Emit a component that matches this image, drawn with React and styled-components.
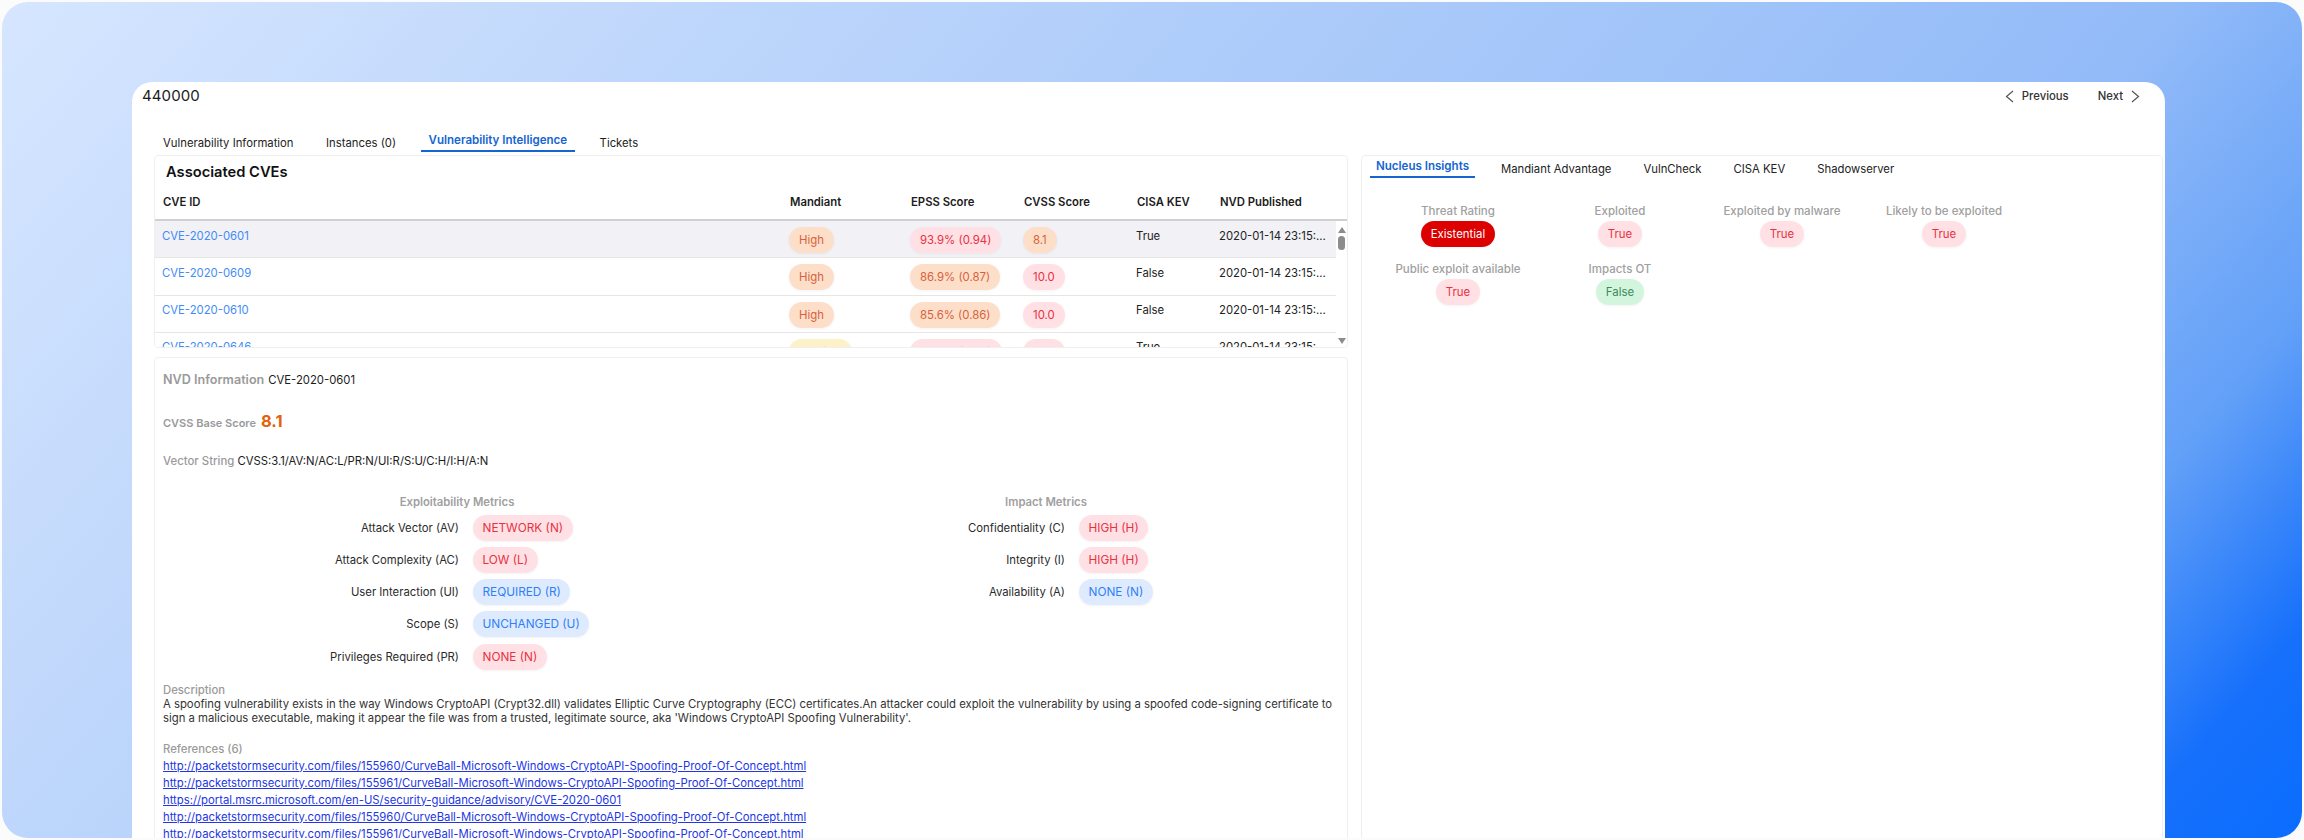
import React from 'react';
import styled, { createGlobalStyle } from 'styled-components';

const Global = createGlobalStyle`
  html, body { margin: 0; padding: 0; background: #fbfbfb; overflow: hidden; }
  * { box-sizing: border-box; }
  body { font-family: Inter, "Liberation Sans", sans-serif; font-size: 11.3px; color: #222; }
`;

const TONES = {
  red: ['#ffe1e5', '#e9303f'],
  orange: ['#fddfc9', '#d8613c'],
  yellow: ['#fdf1c7', '#b98a1d'],
  blue: ['#deebff', '#2f80f7'],
  green: ['#d3f5dd', '#3b8a5c'],
  solid: ['#dc0000', '#ffffff'],
};

const Frame = styled.div`
  margin: 2px;
  width: 2300px;
  height: 836px;
  border-radius: 26px;
  overflow: hidden;
  padding: 80px 0 0 130px;
  background: linear-gradient(131deg, #d6e6ff 0%, #bcd5fb 26%, #93bbf8 72%, #62a0f8 85%, #1670fb 94%, #0a6dff 100%);
`;
const Card = styled.div`
  width: 2033px;
  height: 760px;
  background: #fff;
  border-radius: 20px 20px 0 0;
  overflow: hidden;
`;
const HeaderBar = styled.div`
  height: 28px;
  padding: 0 25px 0 10px;
  display: flex;
  align-items: center;
  justify-content: space-between;
`;
const RecordId = styled.div`
  font-size: 15px;
  line-height: 18px;
  letter-spacing: 0.1px;
  color: #1b1b1b;
`;
const Pager = styled.div`
  display: flex;
  gap: 29px;
`;
const PagerButton = styled.div`
  display: flex;
  align-items: center;
  gap: 8px;
  color: #333;
  font-size: 11.3px;
  font-weight: 500;
`;
const TabRow = styled.div`
  display: flex;
  align-items: flex-end;
  gap: ${p => p.$gap}px;
  height: ${p => p.$height}px;
  padding: ${p => p.$pad};
`;
const Tab = styled.div`
  padding: 0 ${p => p.$side}px ${p => (p.$active ? '2px' : '1px')};
  line-height: 16px;
  font-size: ${p => (p.$active ? 11.55 : 11.3)}px;
  white-space: nowrap;
  font-weight: ${p => (p.$active ? 600 : 400)};
  color: ${p => (p.$active ? '#1565d0' : '#222')};
  border-bottom: ${p => (p.$active ? '2px solid #1565d0' : '0')};
`;
const Body = styled.div`
  display: flex;
  gap: 13px;
  padding-left: 22px;
`;
const LeftColumn = styled.div`
  width: 1194px;
  display: flex;
  flex-direction: column;
  gap: 9px;
`;
const Panel = styled.div`
  border: 1px solid #efefef;
  border-radius: 4px;
  background: #fff;
  overflow: hidden;
`;
const TablePanel = styled(Panel)`
  height: 193px;
`;
const PanelTitle = styled.div`
  font-size: 14.7px;
  font-weight: 600;
  line-height: 20px;
  padding: 5.5px 0 0 11px;
  height: 26px;
  color: #111;
`;
const COLS = '633px 121px 113px 113px 83px 118px';
const HeadRow = styled.div`
  display: grid;
  grid-template-columns: ${COLS};
  height: 39px;
  align-items: center;
  padding-top: 3px;
  border-bottom: 2px solid #d0d0d0;
  font-weight: 600;
  font-size: 11.3px;
  color: #1c1c1c;
`;
const HeadCell = styled.div`
  padding-left: ${p => (p.$first ? 8 : 2)}px;
  margin-top: -1px;
`;
const TableBody = styled.div`
  display: flex;
  height: 127px;
  overflow: hidden;
`;
const Rows = styled.div`
  width: 1181px;
`;
const Row = styled.div`
  display: grid;
  grid-template-columns: ${COLS};
  height: 37.33px;
  border-bottom: 1px solid #e6e6e6;
  background: ${p => (p.$selected ? '#f1f1f6' : '#fff')};
`;
const Cell = styled.div`
  padding: 7.5px 0 0 1px;
  line-height: 15px;
  font-size: 11.3px;
  color: #222;
  min-width: 0;
`;
const DateCell = styled(Cell)`
  width: 110px;
  white-space: nowrap;
  overflow: hidden;
  text-overflow: ellipsis;
`;
const LinkCell = styled(Cell)`
  padding-left: 7px;
  color: #3f8cf6;
`;
const PillCell = styled.div`
  padding: 6px 0 0 1px;
`;
const Pill = styled.span`
  display: inline-flex;
  align-items: center;
  height: 26px;
  padding: 0 10px;
  border-radius: 13px;
  font-size: 11.4px;
  white-space: nowrap;
  background: ${p => TONES[p.$tone][0]};
  color: ${p => TONES[p.$tone][1]};
  box-shadow: 0 1px 3px rgba(0, 0, 0, 0.05);
`;
const ScrollTrack = styled.div`
  width: 12px;
  padding-top: 6px;
  height: 127px;
  display: flex;
  flex-direction: column;
  align-items: center;
  background: #fff;
`;
const ScrollThumb = styled.div`
  width: 7px;
  height: 14px;
  margin-top: 3px;
  border-radius: 4px;
  background: #8c8c8c;
`;
const ScrollArrow = styled.svg`
  width: 8px;
  height: 6px;
  fill: #8c8c8c;
  margin-top: ${p => p.$top || 0}px;
`;
const NvdPanel = styled(Panel)`
  height: 500px;
  padding: 13px 8px 0;
`;
const InfoLine = styled.div`
  display: flex;
  align-items: center;
  gap: ${p => p.$gap || 3}px;
  line-height: 18px;
  margin-top: ${p => p.$top || 0}px;
  color: #1c1c1c;
  font-size: 11.3px;
`;
const NvdHeading = styled.span`
  font-size: 12.6px;
  font-weight: 600;
  color: #9a9a9a;
`;
const SmallHeading = styled.span`
  font-size: ${p => p.$size || 11.4}px;
  font-weight: ${p => p.$weight || 500};
  color: #9a9a9a;
`;
const Score = styled.span`
  font-size: 16.5px;
  font-weight: 700;
  color: #e2620e;
  line-height: 24px;
  margin-top: -4px;
`;
const MetricsRow = styled.div`
  display: flex;
  margin-top: 24px;
  padding-left: 167px;
`;
const MetricGroup = styled.div`
  width: ${p => p.$width}px;
`;
const MetricTitle = styled.div`
  width: ${p => p.$width}px;
  text-align: center;
  line-height: 16px;
  font-weight: 600;
  color: #a0a0a0;
  font-size: 11.3px;
  margin-bottom: 4.5px;
`;
const MetricGrid = styled.div`
  display: grid;
  grid-template-columns: ${p => p.$label}px auto;
  column-gap: 14px;
  row-gap: 6.3px;
  justify-content: start;
  align-items: center;
`;
const MetricLabel = styled.div`
  text-align: right;
  white-space: nowrap;
  color: #2a2a2a;
  font-size: 11.3px;
`;
const MetricPill = styled(Pill)`
  justify-self: start;
  padding: 0 9.5px;
  font-size: 11.8px;
`;
const BlockHeading = styled.div`
  line-height: 14px;
  margin-top: ${p => p.$top}px;
  font-weight: 500;
  color: #9a9a9a;
  font-size: 11.3px;
`;
const Paragraph = styled.div`
  width: 1176px;
  line-height: 14px;
  color: #333;
  font-size: 11.3px;
`;
const RefList = styled.div`
  margin-top: 1.5px;
  display: flex;
  flex-direction: column;
  align-items: flex-start;
`;
const RefLink = styled.a`
  line-height: 17px;
  font-size: 11.3px;
  color: #2236e4;
  text-decoration: underline;
`;
const RightPanel = styled(Panel)`
  width: 802px;
  height: 700px;
`;
const InsightGrid = styled.div`
  margin: 25.5px 0 0 15px;
  width: 648px;
  display: grid;
  grid-template-columns: repeat(4, 162px);
  row-gap: 14.5px;
`;
const Insight = styled.div`
  display: flex;
  flex-direction: column;
  align-items: center;
  gap: 2.5px;
`;
const InsightLabel = styled.div`
  line-height: 15px;
  font-size: 11.5px;
  font-weight: 500;
  color: #a0a0a0;
  white-space: nowrap;
`;

const Chevron = ({ left }) => (
  <svg width="9" height="13" viewBox="0 0 9 13" fill="none" stroke="#555" strokeWidth="1.2">
    <path d={left ? 'M8 1 L1.5 6.5 L8 12' : 'M1 1 L7.5 6.5 L1 12'} />
  </svg>
);

const cveRows = [
  ['CVE-2020-0601', ['High', 'orange'], ['93.9% (0.94)', 'red'], ['8.1', 'orange'], 'True'],
  ['CVE-2020-0609', ['High', 'orange'], ['86.9% (0.87)', 'orange'], ['10.0', 'red'], 'False'],
  ['CVE-2020-0610', ['High', 'orange'], ['85.6% (0.86)', 'orange'], ['10.0', 'red'], 'False'],
  ['CVE-2020-0646', ['Medium', 'yellow'], ['94.4% (0.94)', 'red'], ['10.0', 'red'], 'True'],
];

const exploitMetrics = [
  ['Attack Vector (AV)', 'NETWORK (N)', 'red'],
  ['Attack Complexity (AC)', 'LOW (L)', 'red'],
  ['User Interaction (UI)', 'REQUIRED (R)', 'blue'],
  ['Scope (S)', 'UNCHANGED (U)', 'blue'],
  ['Privileges Required (PR)', 'NONE (N)', 'red'],
];
const impactMetrics = [
  ['Confidentiality (C)', 'HIGH (H)', 'red'],
  ['Integrity (I)', 'HIGH (H)', 'red'],
  ['Availability (A)', 'NONE (N)', 'blue'],
];
const insights = [
  ['Threat Rating', 'Existential', 'solid'],
  ['Exploited', 'True', 'red'],
  ['Exploited by malware', 'True', 'red'],
  ['Likely to be exploited', 'True', 'red'],
  ['Public exploit available', 'True', 'red'],
  ['Impacts OT', 'False', 'green'],
];
const refs = [
  'http://packetstormsecurity.com/files/155960/CurveBall-Microsoft-Windows-CryptoAPI-Spoofing-Proof-Of-Concept.html',
  'http://packetstormsecurity.com/files/155961/CurveBall-Microsoft-Windows-CryptoAPI-Spoofing-Proof-Of-Concept.html',
  'https://portal.msrc.microsoft.com/en-US/security-guidance/advisory/CVE-2020-0601',
  'http://packetstormsecurity.com/files/155960/CurveBall-Microsoft-Windows-CryptoAPI-Spoofing-Proof-Of-Concept.html',
  'http://packetstormsecurity.com/files/155961/CurveBall-Microsoft-Windows-CryptoAPI-Spoofing-Proof-Of-Concept.html',
];

const Metrics = ({ title, titleWidth, label, width, items }) => (
  <MetricGroup $width={width}>
    <MetricTitle $width={titleWidth}>{title}</MetricTitle>
    <MetricGrid $label={label}>
      {items.map(([name, value, tone]) => (
        <React.Fragment key={name}>
          <MetricLabel>{name}</MetricLabel>
          <MetricPill $tone={tone}>{value}</MetricPill>
        </React.Fragment>
      ))}
    </MetricGrid>
  </MetricGroup>
);

export default function App() {
  return (
    <>
      <Global />
      <Frame>
        <Card>
          <HeaderBar>
            <RecordId>440000</RecordId>
            <Pager>
              <PagerButton><Chevron left />Previous</PagerButton>
              <PagerButton>Next<Chevron /></PagerButton>
            </Pager>
          </HeaderBar>
          <TabRow $gap={16.5} $height={45} $pad="0 0 3px 23px">
            <Tab $side={8}>Vulnerability Information</Tab>
            <Tab $side={8}>Instances (0)</Tab>
            <Tab $side={8} $active>Vulnerability Intelligence</Tab>
            <Tab $side={8}>Tickets</Tab>
          </TabRow>
          <Body>
            <LeftColumn>
              <TablePanel>
                <PanelTitle>Associated CVEs</PanelTitle>
                <HeadRow>
                  <HeadCell $first>CVE ID</HeadCell>
                  <HeadCell>Mandiant</HeadCell>
                  <HeadCell>EPSS Score</HeadCell>
                  <HeadCell>CVSS Score</HeadCell>
                  <HeadCell>CISA KEV</HeadCell>
                  <HeadCell>NVD Published</HeadCell>
                </HeadRow>
                <TableBody>
                  <Rows>
                    {cveRows.map(([id, man, epss, cvss, kev], i) => (
                      <Row key={id} $selected={i === 0}>
                        <LinkCell>{id}</LinkCell>
                        <PillCell><Pill $tone={man[1]}>{man[0]}</Pill></PillCell>
                        <PillCell><Pill $tone={epss[1]}>{epss[0]}</Pill></PillCell>
                        <PillCell><Pill $tone={cvss[1]}>{cvss[0]}</Pill></PillCell>
                        <Cell>{kev}</Cell>
                        <DateCell>2020-01-14 23:15:30</DateCell>
                      </Row>
                    ))}
                  </Rows>
                  <ScrollTrack>
                    <ScrollArrow viewBox="0 0 8 6"><path d="M4 0 L8 6 L0 6 Z" /></ScrollArrow>
                    <ScrollThumb />
                    <ScrollArrow viewBox="0 0 8 6" $top={88}><path d="M0 0 L8 0 L4 6 Z" /></ScrollArrow>
                  </ScrollTrack>
                </TableBody>
              </TablePanel>
              <NvdPanel>
                <InfoLine $gap={4}><NvdHeading>NVD Information</NvdHeading>CVE-2020-0601</InfoLine>
                <InfoLine $top={24} $gap={5}><SmallHeading $size={11} $weight={600}>CVSS Base Score</SmallHeading><Score>8.1</Score></InfoLine>
                <InfoLine $top={19}><SmallHeading>Vector String</SmallHeading>CVSS:3.1/AV:N/AC:L/PR:N/UI:R/S:U/C:H/I:H/A:N</InfoLine>
                <MetricsRow>
                  <Metrics title="Exploitability Metrics" titleWidth={254} label={129} width={638} items={exploitMetrics} />
                  <Metrics title="Impact Metrics" titleWidth={156} label={97} width={200} items={impactMetrics} />
                </MetricsRow>
                <BlockHeading $top={13.5}>Description</BlockHeading>
                <Paragraph>
                  A spoofing vulnerability exists in the way Windows CryptoAPI (Crypt32.dll) validates Elliptic Curve Cryptography (ECC) certificates.An attacker could exploit the vulnerability by using a spoofed code-signing certificate to sign a malicious executable, making it appear the file was from a trusted, legitimate source, aka 'Windows CryptoAPI Spoofing Vulnerability'.
                </Paragraph>
                <BlockHeading $top={17}>References (6)</BlockHeading>
                <RefList>
                  {refs.map((r, i) => <RefLink key={i} href="#">{r}</RefLink>)}
                </RefList>
              </NvdPanel>
            </LeftColumn>
            <RightPanel>
              <TabRow $gap={20} $height={22} $pad="0 0 0 8px">
                <Tab $side={6} $active>Nucleus Insights</Tab>
                <Tab $side={6}>Mandiant Advantage</Tab>
                <Tab $side={6}>VulnCheck</Tab>
                <Tab $side={6}>CISA KEV</Tab>
                <Tab $side={6}>Shadowserver</Tab>
              </TabRow>
              <InsightGrid>
                {insights.map(([label, value, tone]) => (
                  <Insight key={label}>
                    <InsightLabel>{label}</InsightLabel>
                    <Pill $tone={tone}>{value}</Pill>
                  </Insight>
                ))}
              </InsightGrid>
            </RightPanel>
          </Body>
        </Card>
      </Frame>
    </>
  );
}
